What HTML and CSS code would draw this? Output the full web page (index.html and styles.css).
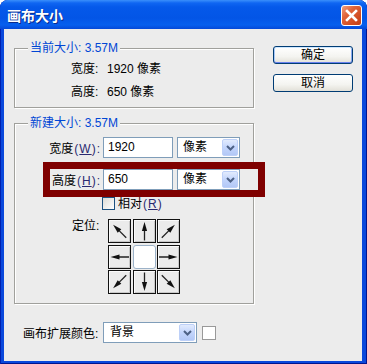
FILE: index.html
```html
<!DOCTYPE html>
<html lang="zh-CN">
<head>
<meta charset="utf-8">
<title>画布大小</title>
<link rel="stylesheet" href="styles.css">
</head>
<body>
<div class="window">
  <div class="titlebar">
    <span class="title">画布大小</span>
    <span class="close">
      <svg width="19" height="19" viewBox="0 0 19 19"><path d="M5 5 L14 14 M14 5 L5 14" stroke="#fff" stroke-width="2.6" stroke-linecap="square"/></svg>
    </span>
  </div>
  <div class="client">
    <div class="main">
      <div class="group g1">
        <div class="legend">当前大小: 3.57M</div>
        <div class="info first"><span class="k">宽度:</span>1920 像素</div>
        <div class="info second"><span class="k">高度:</span>650 像素</div>
      </div>
      <div class="group g2">
        <div class="legend">新建大小: 3.57M</div>
        <div class="row row-w">
          <span class="lbl lbl-w">宽度<span class="acc">(<u>W</u>):</span></span>
          <span class="input">1920</span>
          <span class="select sel-unit"><span class="sel-text">像素</span><span class="drop"><svg width="9" height="6" viewBox="0 0 9 6"><path d="M1 1 L4.5 4.5 L8 1" fill="none" stroke="#4d6185" stroke-width="2"/></svg></span></span>
        </div>
        <div class="hl">
          <div class="row">
            <span class="lbl lbl-h">高度<span class="acc">(<u>H</u>):</span></span>
            <span class="input">650</span>
            <span class="select sel-unit"><span class="sel-text">像素</span><span class="drop"><svg width="9" height="6" viewBox="0 0 9 6"><path d="M1 1 L4.5 4.5 L8 1" fill="none" stroke="#4d6185" stroke-width="2"/></svg></span></span>
          </div>
        </div>
        <div class="check-row">
          <span class="checkbox"></span><span class="check-text">相对<span class="acc">(<u>R</u>)</span></span>
        </div>
        <div class="anchor-row">
          <span class="anchor-lbl">定位:</span>
          <div class="anchor-grid">
            <span class="cell"><svg viewBox="0 0 21 22"><g transform="rotate(-45 10.5 11)"><path class="shaft" d="M10.5 9 V20.5"/><path class="head" d="M10.5 2 L7.9 11 L13.1 11 Z"/></g></svg></span>
            <span class="cell"><svg viewBox="0 0 21 22"><g><path class="shaft" d="M10.5 9 V20.5"/><path class="head" d="M10.5 2 L7.9 11 L13.1 11 Z"/></g></svg></span>
            <span class="cell"><svg viewBox="0 0 21 22"><g transform="rotate(45 10.5 11)"><path class="shaft" d="M10.5 9 V20.5"/><path class="head" d="M10.5 2 L7.9 11 L13.1 11 Z"/></g></svg></span>
            <span class="cell"><svg viewBox="0 0 21 22"><g transform="rotate(-90 10.5 11)"><path class="shaft" d="M10.5 9 V20.5"/><path class="head" d="M10.5 2 L7.9 11 L13.1 11 Z"/></g></svg></span>
            <span class="cell center"></span>
            <span class="cell"><svg viewBox="0 0 21 22"><g transform="rotate(90 10.5 11)"><path class="shaft" d="M10.5 9 V20.5"/><path class="head" d="M10.5 2 L7.9 11 L13.1 11 Z"/></g></svg></span>
            <span class="cell"><svg viewBox="0 0 21 22"><g transform="rotate(-135 10.5 11)"><path class="shaft" d="M10.5 9 V20.5"/><path class="head" d="M10.5 2 L7.9 11 L13.1 11 Z"/></g></svg></span>
            <span class="cell"><svg viewBox="0 0 21 22"><g transform="rotate(180 10.5 11)"><path class="shaft" d="M10.5 9 V20.5"/><path class="head" d="M10.5 2 L7.9 11 L13.1 11 Z"/></g></svg></span>
            <span class="cell"><svg viewBox="0 0 21 22"><g transform="rotate(135 10.5 11)"><path class="shaft" d="M10.5 9 V20.5"/><path class="head" d="M10.5 2 L7.9 11 L13.1 11 Z"/></g></svg></span>
          </div>
        </div>
      </div>
      <div class="ext-row">
        <span class="ext-lbl">画布扩展颜色:</span>
        <span class="select sel-ext"><span class="sel-text">背景</span><span class="drop"><svg width="9" height="6" viewBox="0 0 9 6"><path d="M1 1 L4.5 4.5 L8 1" fill="none" stroke="#4d6185" stroke-width="2"/></svg></span></span>
        <span class="swatch"></span>
      </div>
    </div>
    <div class="side">
      <span class="btn default">确定</span>
      <span class="btn">取消</span>
    </div>
  </div>
</div>
</body>
</html>
```

FILE: styles.css
```css
html, body {
  margin: 0;
  padding: 0;
  background: #ffffff;
}

body {
  font-family: "Liberation Sans", "Noto Sans CJK SC", sans-serif;
  font-size: 12px;
  color: #000;
}

.window {
  width: 367px;
  height: 364px;
  box-sizing: border-box;
  display: flex;
  flex-direction: column;
  background: #0a48dc;
  border-radius: 8px 8px 0 0;
  overflow: hidden;
  box-shadow: inset 1px 0 0 #0020b0, inset -1px 0 0 #00158f, inset 0 -1px 0 #00158f;
}

.titlebar {
  flex: none;
  height: 29px;
  box-sizing: border-box;
  display: flex;
  align-items: flex-start;
  justify-content: space-between;
  padding: 0 5px 0 7px;
  background: linear-gradient(#3a8ffb 0px, #0f66f2 3px, #0559ea 7px, #0355e6 18px, #065fee 25px, #0449d8 29px);
}

.title {
  margin-top: 6px;
  color: #fff;
  font-family: "Noto Sans CJK SC", sans-serif;
  font-weight: 700;
  font-size: 14px;
  line-height: 18px;
  text-shadow: 1px 1px 0 #0b2a8a;
}

.close {
  margin-top: 5px;
  width: 21px;
  height: 21px;
  box-sizing: border-box;
  border: 1px solid #fff;
  border-radius: 3px;
  background: linear-gradient(135deg, #f0a080 0%, #e0643a 35%, #cf4a20 75%, #c04018 100%);
  display: flex;
  align-items: center;
  justify-content: center;
}

.close svg {
  display: block;
}

.client {
  flex: 1;
  margin: 0 5px 3px 4px;
  background: #ececec;
  display: flex;
  padding-left: 10px;
}

.main {
  width: 240px;
  display: flex;
  flex-direction: column;
}

.group {
  border: 1px solid #a0a09c;
  box-shadow: inset 1px 1px 0 #fff, 1px 1px 0 #fff;
}

.legend {
  width: fit-content;
  margin: -8px 0 0 13px;
  padding: 0 2px;
  height: 14px;
  line-height: 14px;
  background: #ececec;
  color: #0046d5;
}

.g1 {
  margin-top: 19px;
  height: 60px;
  box-sizing: border-box;
}

.info {
  margin-left: 56px;
  line-height: 16px;
  height: 16px;
}

.info.first {
  margin-top: 6px;
}

.info.second {
  margin-top: 7px;
}

.k {
  display: inline-block;
  width: 36px;
}

.g2 {
  margin-top: 15px;
  padding-bottom: 9px;
}

.row {
  display: flex;
  align-items: center;
  height: 21px;
}

.row-w {
  margin-top: 7px;
}

.lbl {
  text-align: right;
  margin-right: 2px;
  white-space: nowrap;
}

.lbl-w {
  width: 86px;
}

.lbl-h {
  width: 51px;
}

.acc {
  color: #2a2a70;
  letter-spacing: 1px;
  margin-left: 1px;
}

.input {
  width: 70px;
  height: 21px;
  box-sizing: border-box;
  border: 1px solid #7f9db9;
  background: #fff;
  padding-left: 4px;
  line-height: 19px;
  font-size: 12px;
}

.select {
  height: 21px;
  box-sizing: border-box;
  border: 1px solid #7f9db9;
  background: #fff;
  display: flex;
  align-items: center;
  padding-right: 1px;
}

.sel-unit {
  width: 63px;
  margin-left: 4px;
}

.sel-text {
  flex: 1;
  padding-left: 5px;
  line-height: 19px;
}

.drop {
  width: 16px;
  height: 17px;
  box-sizing: border-box;
  border: 1px solid #bdd0f8;
  border-radius: 2px;
  background: linear-gradient(#e2ebfd, #c3d5fc 50%, #b3c8f6);
  display: flex;
  align-items: center;
  justify-content: center;
}

.drop svg {
  display: block;
}

.hl {
  margin-top: 4px;
  margin-left: 28px;
  width: 222px;
  height: 35px;
  box-sizing: border-box;
  border: 7px solid #7f0000;
  background: #ececec;
}

.check-row {
  display: flex;
  align-items: center;
  height: 13px;
  margin-left: 87px;
}

.checkbox {
  width: 13px;
  height: 13px;
  box-sizing: border-box;
  border: 1px solid #1c5180;
  background: linear-gradient(135deg, #dcdcd7, #fff);
}

.check-text {
  margin-left: 3px;
  line-height: 14px;
}

.anchor-row {
  display: flex;
  margin-top: 9px;
  margin-left: 57px;
}

.anchor-lbl {
  width: 36px;
  line-height: 14px;
}

.anchor-grid {
  display: grid;
  grid-template-columns: repeat(3, 23px);
  grid-template-rows: repeat(3, 24px);
  gap: 1.5px;
}

.cell {
  box-sizing: border-box;
  border: 1px solid #111;
  background: #ebebeb;
  box-shadow: inset 1px 1px 0 #fafafa, inset -1px -1px 0 #c8c8c8;
}

.cell svg {
  display: block;
  width: 21px;
  height: 22px;
}

.cell.center {
  border: 1px solid #9cb2c8;
  border-radius: 3px;
  background: #fff;
  box-shadow: none;
}

.shaft {
  stroke: #222;
  stroke-width: 1.3;
  fill: none;
}

.head {
  fill: #111;
}

.ext-row {
  display: flex;
  align-items: center;
  margin-top: 18px;
  margin-left: 9px;
}

.ext-lbl {
  width: 80px;
  white-space: nowrap;
}

.sel-ext {
  width: 94px;
}

.sel-ext .sel-text {
  padding-left: 6px;
}

.swatch {
  width: 14px;
  height: 14px;
  box-sizing: border-box;
  margin-left: 5px;
  border: 1px solid #999;
  background: #fff;
}

.side {
  margin-left: 19px;
  margin-top: 17px;
  display: flex;
  flex-direction: column;
  gap: 10px;
}

.btn {
  width: 80px;
  height: 18px;
  box-sizing: border-box;
  border: 1px solid #003c74;
  border-radius: 3px;
  background: linear-gradient(#ffffff, #f4f4f0 60%, #e2e0d8);
  display: flex;
  align-items: center;
  justify-content: center;
  line-height: 16px;
}

.btn.default {
  box-shadow: inset 0 1px 0 #cee7ff, inset 0 -1px 0 #6982ee, inset 1px 0 0 #a8c8f8, inset -1px 0 0 #8aa8f0;
}
```
